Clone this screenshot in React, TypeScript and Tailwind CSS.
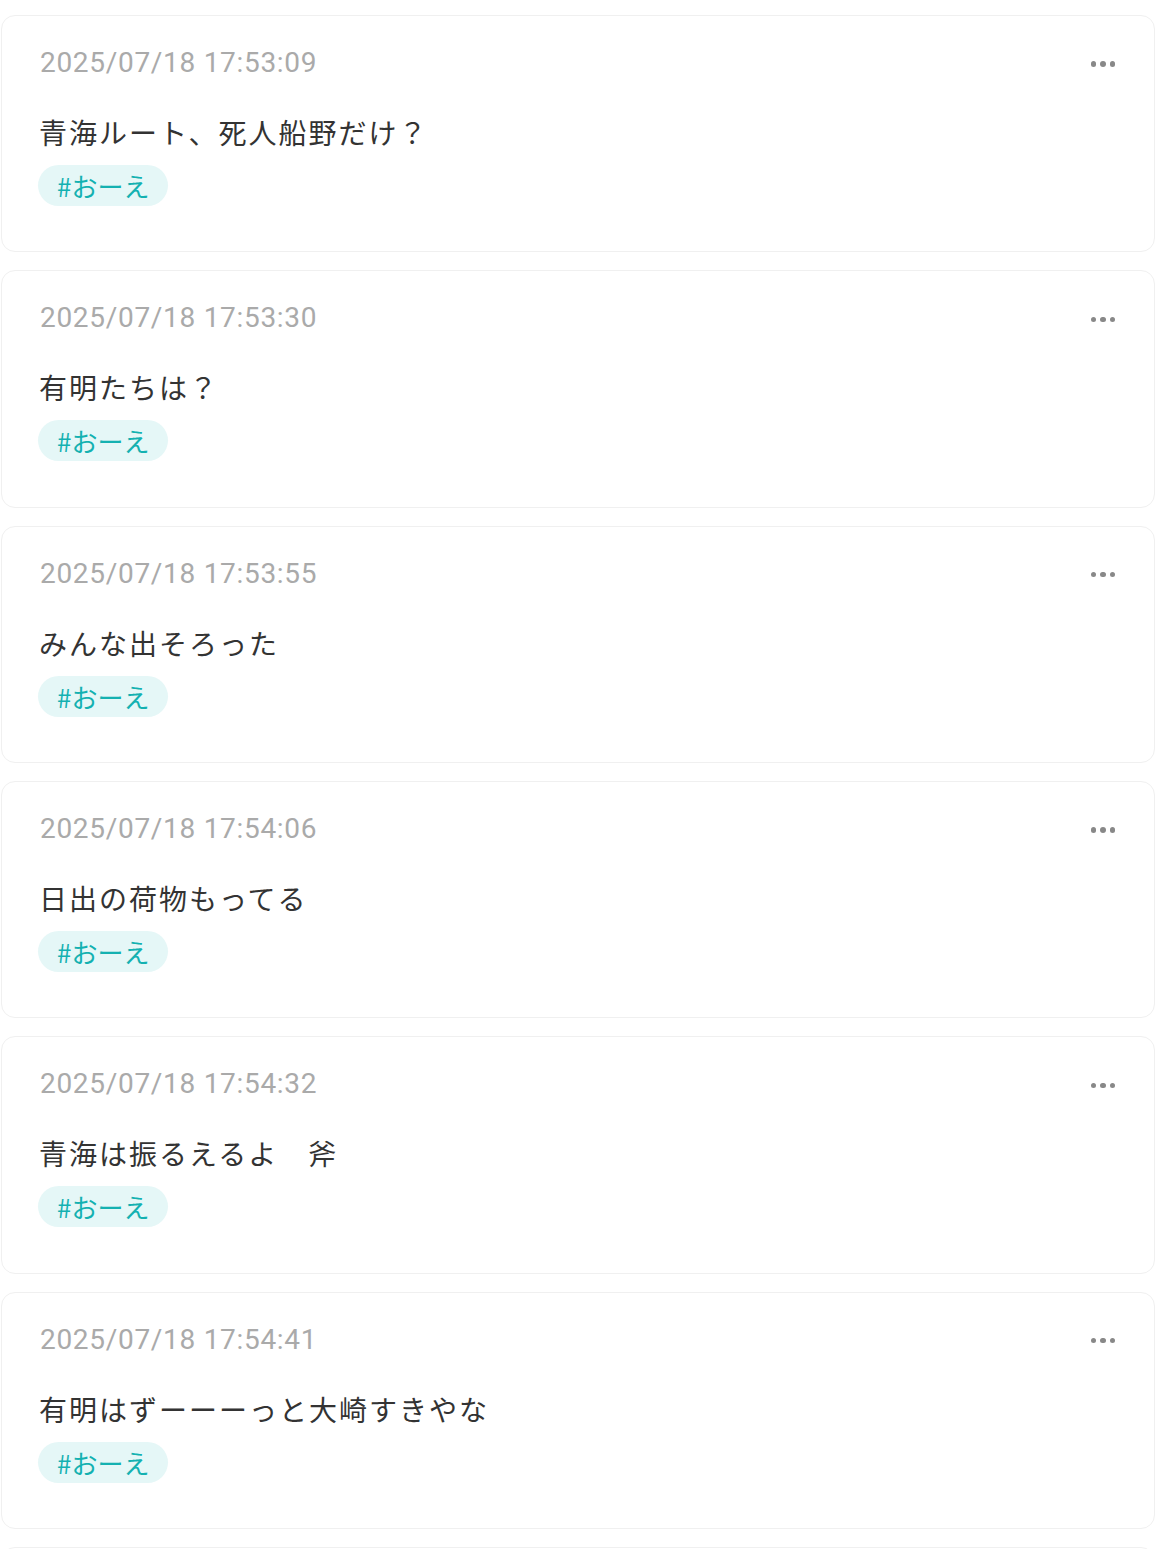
import React from "react";

const posts = [
  { time: "2025/07/18 17:53:09", text: "青海ルート、死人船野だけ？" },
  { time: "2025/07/18 17:53:30", text: "有明たちは？" },
  { time: "2025/07/18 17:53:55", text: "みんな出そろった" },
  { time: "2025/07/18 17:54:06", text: "日出の荷物もってる" },
  { time: "2025/07/18 17:54:32", text: "青海は振るえるよ　斧" },
  { time: "2025/07/18 17:54:41", text: "有明はずーーーっと大崎すきやな" },
];

function Dots() {
  return (
    <div className="flex items-center gap-[4px] pt-[2px]">
      <span className="block w-[5.5px] h-[5.5px] rounded-full bg-[#888888]" />
      <span className="block w-[5.5px] h-[5.5px] rounded-full bg-[#888888]" />
      <span className="block w-[5.5px] h-[5.5px] rounded-full bg-[#888888]" />
    </div>
  );
}

export default function App() {
  return (
    <div
      className="bg-white h-[1549px] overflow-hidden pt-[15px] px-[1px] flex flex-col gap-[18px]"
      style={{ fontFamily: '"Noto Sans CJK JP", sans-serif' }}
    >
      {posts.map((p, i) => (
        <div
          key={i}
          className="shrink-0 border border-[#f0f0f0] rounded-[14px] bg-white pl-[36px] pr-[39px] pt-[28px] pb-[45.33px]"
        >
          <div className="flex items-center justify-between">
            <span
              className="pl-[2px] text-[28px] leading-[38px] tracking-[0.7px] text-[#aaaaaa]"
              style={{ fontFamily: "Roboto, sans-serif" }}
            >
              {p.time}
            </span>
            <Dots />
          </div>
          <div className="mt-[30px] pl-[1px] text-[28px] leading-[40px] tracking-[2px] text-[#333333]">
            {p.text}
          </div>
          <div className="mt-[13px] flex">
            <span className="rounded-full bg-[#e5f7f7] text-[#14b1b1] text-[26px] leading-[41px] px-[19px]">
              #おーえ
            </span>
          </div>
        </div>
      ))}
      <div className="shrink-0 h-[237px] border border-[#f0f0f0] rounded-[14px] bg-white" />
    </div>
  );
}
